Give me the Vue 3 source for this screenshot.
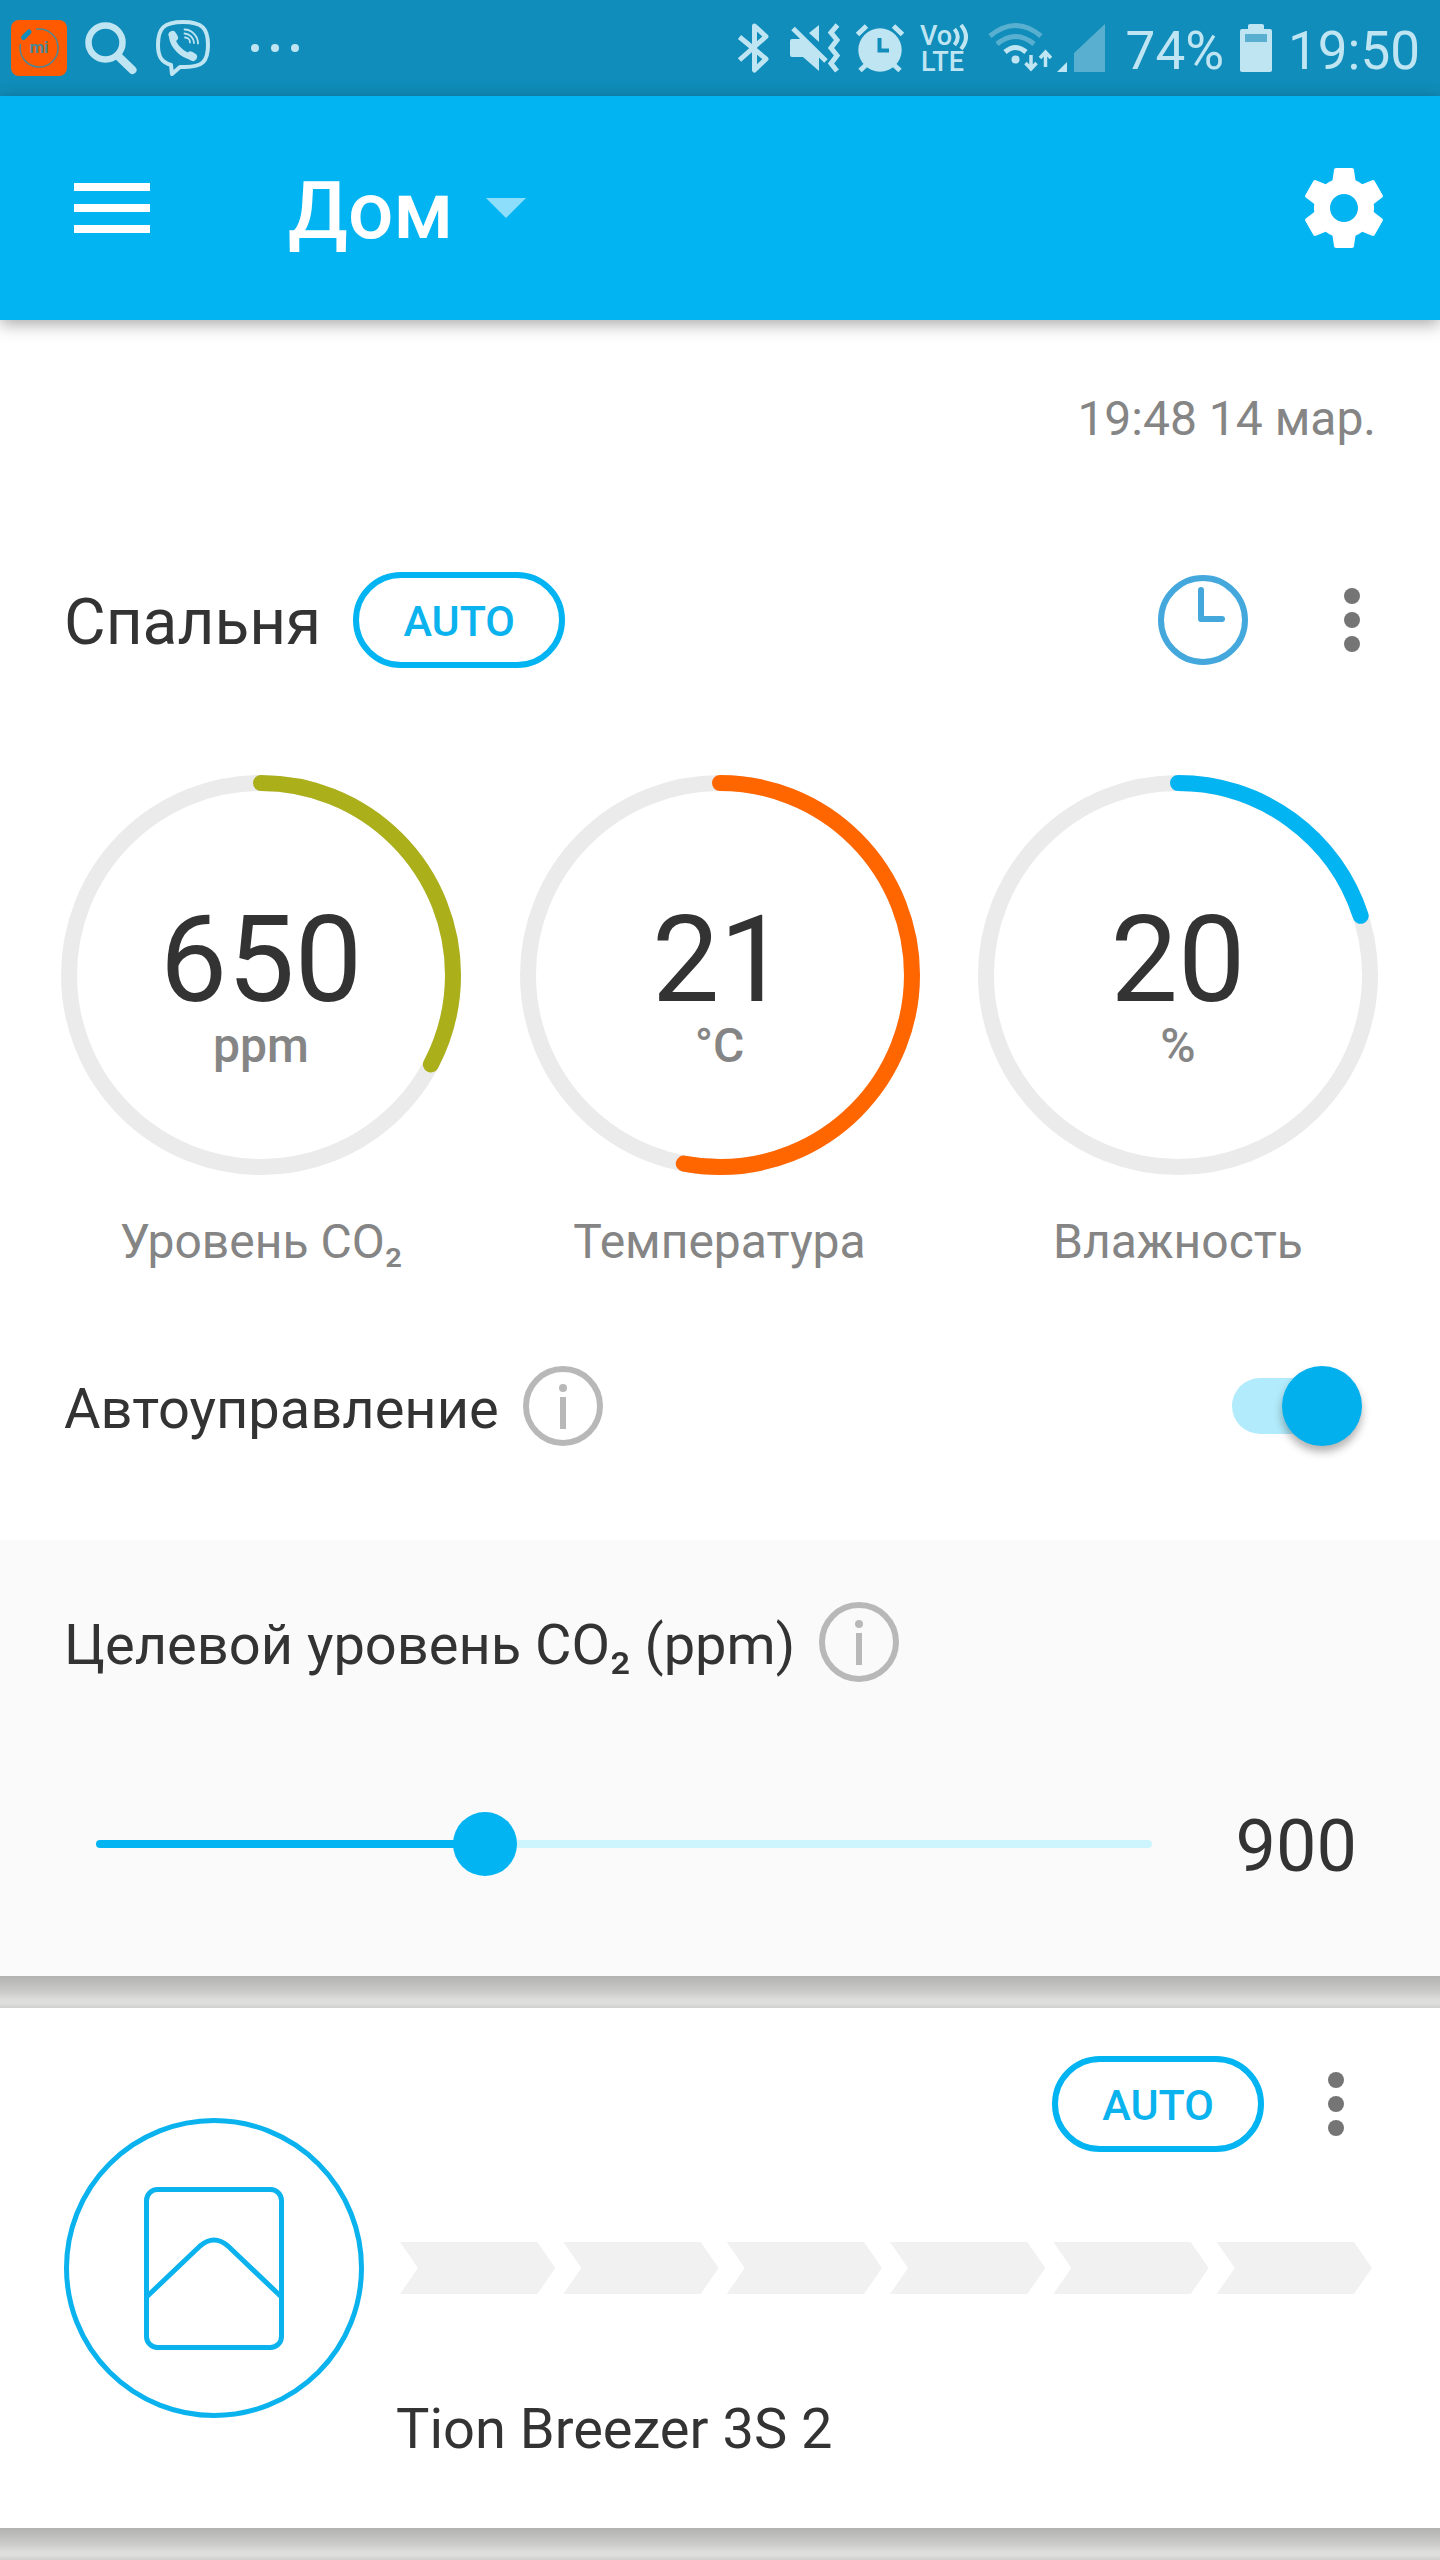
<script setup>
import { ref, computed } from 'vue';

const home = ref('home');
const autoControl = ref(true);
const target = ref(900);
const minTarget = 450;
const maxTarget = 1700;

const radius = 192;
const circumference = 2 * Math.PI * radius;

const gauges = [
  { label: 'Уровень CO₂', value: 650, unit: 'ppm', color: '#abaf1a', part: 0.327 },
  { label: 'Температура', value: 21, unit: '°C', color: '#ff6600', part: 0.53 },
  { label: 'Влажность', value: 20, unit: '%', color: '#02b4f2', part: 0.2 }
];

const fill = computed(() => ((target.value - minTarget) / (maxTarget - minTarget)) * 100 + '%');

function dash(part) {
  return `${circumference * part} ${circumference}`;
}
</script>

<template>
  <div class="app">
    <div class="status-bar">
      <div class="status-group notifications">
        <svg width="56" height="56" viewBox="0 0 56 56">
          <rect width="56" height="56" rx="8" fill="#ff5a00" />
          <path d="M25 9.200A19 19 0 1 1 9.500 24" fill="none" stroke="#4a8796" stroke-width="1.500" />
          <path d="M12.500 17.500 18 12" stroke="#108dba" stroke-width="5" stroke-linecap="round" />
          <text x="28" y="33" class="mi-text">mi</text>
        </svg>
        <svg width="52" height="56" viewBox="0 0 52 56" fill="none" stroke="#bfe5f2">
          <circle cx="20.500" cy="22.500" r="17" stroke-width="6.500" />
          <path d="M33 36 47.500 50" stroke-width="8" stroke-linecap="round" />
        </svg>
        <svg width="56" height="56" viewBox="0 0 56 56" fill="none" stroke="#bfe5f2" stroke-linecap="round">
          <path d="M16 45C6 42 3 36 3 25 3 8 9 2 28 2S53 8 53 25 47 47 30 47H25L17 54Z" stroke-width="4" stroke-linejoin="round" />
          <path d="M17 17C18 26 27 35 37 37" stroke-width="6" />
          <path d="M17.500 15 19 17.500M35.500 35.500 38 37" stroke-width="8" />
          <path d="M29.500 9.500A14 14 0 0 1 43 23.500M29.500 13.500A10 10 0 0 1 39 23M30 17.500A5 5 0 0 1 35 22.500" stroke-width="1.800" />
        </svg>
        <svg class="more-dots" width="48" height="56" viewBox="0 0 48 56" fill="#bfe5f2">
          <circle cx="4" cy="28" r="4" /><circle cx="24" cy="28" r="4" /><circle cx="44" cy="28" r="4" />
        </svg>
      </div>
      <div class="status-group">
        <!-- bluetooth -->
        <svg width="36" height="56" viewBox="0 0 36 56" fill="none" stroke="#bfe5f2" stroke-width="5" stroke-linejoin="round">
          <path d="M3.500 17 30 39 18.500 50V6L30 16.500 3.500 40" />
        </svg>
        <!-- muted, vibrate -->
        <svg width="52" height="56" viewBox="0 0 52 56">
          <path d="M4 19H14L31 36V51L15 37H4Q2 37 2 35V21Q2 19 4 19ZM21 13 31 5V22Z" fill="#bfe5f2" />
          <path d="M8 6.500 41 39.500" stroke="#108dba" stroke-width="3" />
          <path d="M5 8.500 38 41M49.500 5 43 12.500 49 20 43 28 49 35.500 43 43.500 49 51" fill="none" stroke="#bfe5f2" stroke-width="5" />
        </svg>
        <!-- alarm -->
        <svg width="48" height="56" viewBox="0 0 48 56" fill="none" stroke="#bfe5f2" stroke-width="5">
          <circle cx="24" cy="30" r="21.700" fill="#bfe5f2" stroke="none" />
          <path d="M1.500 14.500 10.500 6M37.500 6 46.500 14.500M4 50.500 11 44M44 50.500 37 44" />
          <path d="M23.500 18V30.500H33" stroke="#108dba" stroke-width="4" />
        </svg>
        <svg class="lte" width="50" height="56" viewBox="0 0 50 56" fill="none" stroke="#bfe5f2" stroke-width="4">
          <text x="0" y="25" class="lte-text">Vo</text>
          <text x="1" y="51" class="lte-text">LTE</text>
          <path d="M34.500 9Q41 17 34.500 25M41 5Q51 17 41 29" />
        </svg>
        <div class="network">
          <svg width="66" height="56" viewBox="0 0 66 56" fill="none" stroke="#bfe5f2" stroke-width="5">
            <path d="M4 16Q29.500-5 55 16M11 24Q29.500 9 48 24" stroke="#58afd0" />
            <path d="M19 32Q29.500 23 40 32" />
            <circle cx="29.500" cy="39.500" r="4" fill="#bfe5f2" stroke="none" />
            <path d="M45 35V48M39.500 43 45 49 50.500 43M59.500 47V33M54 38 59.500 32 65 38" stroke-width="3.500" />
          </svg>
          <svg width="50" height="56" viewBox="0 0 50 56">
            <path d="M1 52 11 42V52Z" fill="#bfe5f2" />
            <path d="M18 52V33L49 4V52Z" fill="#58afd0" />
          </svg>
        </div>
        <span class="status-text low">74%</span>
        <svg width="32" height="56" viewBox="0 0 32 56" fill="#bfe5f2">
          <rect x="8" y="4" width="16" height="8" rx="2" />
          <rect y="9" width="32" height="43" rx="2" />
          <rect x="5" y="14" width="22" height="8" fill="#58afd0" />
        </svg>
        <span class="status-text low">19:50</span>
      </div>
    </div>

    <header class="toolbar">
      <button class="icon-button" aria-label="Меню">
        <svg width="76" height="50" viewBox="0 0 76 50" fill="#fff">
          <rect width="76" height="8" /><rect y="21" width="76" height="8" /><rect y="42" width="76" height="8" />
        </svg>
      </button>
      <label class="home">
        <select v-model="home" class="low" aria-label="Дом">
          <option value="home">Дом</option>
        </select>
        <svg width="40" height="20" viewBox="0 0 40 20" fill="#8cdefa"><path d="M0 0H40L20 20Z" /></svg>
      </label>
      <button class="icon-button" aria-label="Настройки">
        <svg width="96" height="96" viewBox="0 0 24 24" fill="#fff">
          <path d="M19.430 12.980c.04-.32.07-.64.07-.98s-.03-.66-.07-.98l2.110-1.650c.19-.15.24-.42.12-.64l-2-3.460c-.12-.22-.39-.3-.61-.22l-2.490 1c-.52-.4-1.080-.73-1.690-.98l-.38-2.650C14.460 2.180 14.250 2 14 2h-4c-.25 0-.46.18-.49.42l-.38 2.650c-.61.25-1.170.59-1.690.98l-2.490-1c-.23-.09-.49 0-.61.22l-2 3.460c-.13.22-.07.49.12.64l2.110 1.650c-.04.32-.07.65-.07.98s.03.66.07.98l-2.110 1.650c-.19.15-.24.42-.12.64l2 3.460c.12.22.39.3.61.22l2.490-1c.52.4 1.080.73 1.690.98l.38 2.650c.03.24.24.42.49.42h4c.25 0 .46-.18.49-.42l.38-2.650c.61-.25 1.170-.59 1.690-.98l2.490 1c.23.09.49 0 .61-.22l2-3.460c.12-.22.07-.49-.12-.64l-2.110-1.650zM12 15.500c-1.930 0-3.500-1.570-3.500-3.500s1.570-3.500 3.500-3.500 3.500 1.570 3.500 3.500-1.570 3.500-3.500 3.500z" />
        </svg>
      </button>
    </header>

    <main>
      <section class="room">
        <time class="updated">19:48 14 мар.</time>

        <div class="room-head">
          <h1 class="low">Спальня</h1>
          <button class="pill">AUTO</button>
          <button class="icon-button timer" aria-label="Таймер">
            <svg width="90" height="90" viewBox="0 0 90 90" fill="none" stroke="#45a8dd" stroke-width="6">
              <circle cx="45" cy="45" r="42" />
              <path d="M43 15V44H64" stroke-linecap="round" stroke-linejoin="round" />
            </svg>
          </button>
          <button class="icon-button" aria-label="Ещё">
            <svg width="16" height="64" viewBox="0 0 16 64" fill="#757575">
              <circle cx="8" cy="8" r="8" /><circle cx="8" cy="32" r="8" /><circle cx="8" cy="56" r="8" />
            </svg>
          </button>
        </div>

        <div class="gauges">
          <div class="gauge" v-for="gauge in gauges" :key="gauge.label">
            <div class="dial">
              <svg width="400" height="400" viewBox="0 0 400 400" fill="none" stroke-width="16">
                <circle cx="200" cy="200" :r="radius" stroke="#ebebeb" />
                <circle cx="200" cy="200" :r="radius" :stroke="gauge.color" :stroke-dasharray="dash(gauge.part)" stroke-linecap="round" transform="rotate(-90 200 200)" />
              </svg>
              <div class="reading">
                <div class="value">{{ gauge.value }}</div>
                <div class="unit">{{ gauge.unit }}</div>
              </div>
            </div>
            <div class="gauge-label">{{ gauge.label }}</div>
          </div>
        </div>

        <div class="setting">
          <label class="setting-label low" for="auto-control">Автоуправление</label>
          <button class="icon-button" aria-label="Об автоуправлении">
            <svg width="80" height="80" viewBox="0 0 80 80" fill="#b8b8b8">
              <circle cx="40" cy="40" r="37" fill="none" stroke="#b8b8b8" stroke-width="6" />
              <circle cx="40" cy="22" r="4" /><rect x="37" y="31" width="6" height="32" />
            </svg>
          </button>
          <input id="auto-control" v-model="autoControl" class="switch" type="checkbox" />
        </div>
      </section>

      <section class="target">
        <div class="setting">
          <label class="setting-label low" for="target">Целевой уровень CO₂ (ppm)</label>
          <button class="icon-button" aria-label="О целевом уровне">
            <svg width="80" height="80" viewBox="0 0 80 80" fill="#b8b8b8">
              <circle cx="40" cy="40" r="37" fill="none" stroke="#b8b8b8" stroke-width="6" />
              <circle cx="40" cy="22" r="4" /><rect x="37" y="31" width="6" height="32" />
            </svg>
          </button>
        </div>
        <div class="slider-row">
          <input id="target" v-model.number="target" class="slider" type="range" :min="minTarget" :max="maxTarget" step="50" :style="{ '--fill': fill }" />
          <output class="low" for="target">{{ target }}</output>
        </div>
      </section>

      <div class="gap"></div>

      <section class="device">
        <svg class="device-icon" width="300" height="300" viewBox="0 0 300 300" fill="none" stroke="#0ab2ee" stroke-width="5">
          <circle cx="150" cy="150" r="147.500" />
          <rect x="82.500" y="71.500" width="135" height="158" rx="11" />
          <path d="M82.500 179 136 128Q150 116 164 128L217.500 179" />
        </svg>
        <div class="device-info">
          <div class="device-actions">
            <button class="pill">AUTO</button>
            <button class="icon-button" aria-label="Ещё">
              <svg width="16" height="64" viewBox="0 0 16 64" fill="#757575">
                <circle cx="8" cy="8" r="8" /><circle cx="8" cy="32" r="8" /><circle cx="8" cy="56" r="8" />
              </svg>
            </button>
          </div>
          <div class="speed">
            <span v-for="step in 6" :key="step"></span>
          </div>
          <h2>Tion Breezer 3S 2</h2>
        </div>
      </section>

      <div class="gap"></div>
    </main>
  </div>
</template>

<style>
body {
  margin: 0;
  background: #dfdfdd;
}
</style>

<style scoped>
.app {
  font-family: Roboto, "Noto Sans", sans-serif;
  color: #333;
}

svg {
  display: block;
  flex: none;
}

h1,
h2 {
  margin: 0;
  font-weight: 400;
}

/* text next to icons sits slightly below their middle */
.low {
  padding-top: 6px;
}

.icon-button {
  padding: 0;
  border: none;
  background: none;
  cursor: pointer;
}

.status-bar {
  display: flex;
  justify-content: space-between;
  align-items: center;
  height: 96px;
  padding: 0 20px 0 11px;
  background: #108dba;
  color: #bfe5f2;
}

.status-group {
  display: flex;
  align-items: center;
  gap: 16px;
}

.notifications {
  gap: 18px;
}

.more-dots {
  margin-left: 22px;
}

.network {
  display: flex;
  gap: 4px;
  margin-right: 4px;
}

.status-text {
  font-size: 53px;
  line-height: 64px;
}

.mi-text {
  font-size: 17px;
  font-weight: 700;
  fill: #4a8796;
  text-anchor: middle;
}

.lte {
  overflow: visible;
}

.lte-text {
  font-size: 27px;
  font-weight: 500;
  fill: #bfe5f2;
  stroke: none;
}

.toolbar {
  position: relative;
  display: flex;
  align-items: center;
  height: 224px;
  padding: 0 48px 0 74px;
  background: #02b4f2;
  box-shadow: 0 4px 16px rgba(0, 0, 0, 0.35);
}

.home {
  display: flex;
  align-items: center;
  flex: 1;
  gap: 32px;
  margin-left: 138px;
}

.home select {
  appearance: none;
  padding-right: 0;
  padding-bottom: 0;
  padding-left: 0;
  border: none;
  background: none;
  color: #fff;
  font-family: inherit;
  font-size: 80px;
  font-weight: 500;
  line-height: 96px;
}

.room {
  padding: 71px 0 94px;
  background: #fff;
}

.updated {
  display: block;
  padding: 0 64px;
  color: #858585;
  font-size: 48px;
  line-height: 56px;
  text-align: right;
}

.room-head {
  display: flex;
  align-items: center;
  margin-top: 125px;
  padding: 0 80px 0 64px;
}

h1 {
  margin-right: 32px;
  font-size: 64px;
  line-height: 72px;
}

.timer {
  margin-right: 96px;
  margin-left: auto;
}

.pill {
  box-sizing: border-box;
  width: 212px;
  height: 96px;
  padding: 2px 0 0;
  border: 6px solid #02b4f2;
  border-radius: 48px;
  background: #fff;
  color: #0ab2ee;
  font-family: inherit;
  font-size: 43px;
  font-weight: 500;
  cursor: pointer;
}

.gauges {
  display: flex;
  justify-content: space-between;
  margin-top: 107px;
  padding: 0 62px 0 61px;
}

.dial {
  display: grid;
  align-items: center;
}

.dial > * {
  grid-area: 1 / 1;
}

.reading {
  padding-top: 26px;
  text-align: center;
}

.value {
  font-size: 120px;
  line-height: 116px;
}

.unit {
  color: #858585;
  font-size: 48px;
  font-weight: 500;
  line-height: 56px;
}

.gauge-label {
  margin-top: 39px;
  color: #858585;
  font-size: 48px;
  line-height: 56px;
  text-align: center;
}

.setting {
  display: flex;
  align-items: center;
  gap: 24px;
  padding: 0 78px 0 64px;
}

.room .setting {
  margin-top: 96px;
}

.setting-label {
  font-size: 56px;
  line-height: 64px;
}

.switch {
  appearance: none;
  display: flex;
  align-items: center;
  width: 130px;
  height: 80px;
  margin: 0 0 0 auto;
  cursor: pointer;
}

.switch::before {
  content: "";
  width: 112px;
  height: 56px;
  border-radius: 28px;
  background: #e0e0e0;
}

.switch::after {
  content: "";
  width: 80px;
  height: 80px;
  margin-left: -112px;
  border-radius: 50%;
  background: #fafafa;
  box-shadow: 0 6px 8px rgba(0, 0, 0, 0.3);
}

.switch:checked::before {
  background: #b2ebfb;
}

.switch:checked::after {
  margin-left: -62px;
  background: #02b0ee;
}

.target {
  padding: 62px 0 88px;
  background: #fafafa;
}

.slider-row {
  display: flex;
  align-items: center;
  gap: 84px;
  min-height: 88px;
  margin-top: 118px;
  padding: 0 83px 0 96px;
}

.slider {
  appearance: none;
  flex: 1;
  min-width: 0;
  height: 64px;
  margin: 0;
  background: none;
  cursor: pointer;
}

.slider::-webkit-slider-runnable-track {
  height: 8px;
  border-radius: 4px;
  background: linear-gradient(to right, #02b4f2 var(--fill), #ccf5fe var(--fill));
}

.slider::-webkit-slider-thumb {
  appearance: none;
  width: 64px;
  height: 64px;
  margin-top: -28px;
  border-radius: 50%;
  background: #02b4f2;
}

output {
  font-size: 72px;
  line-height: 80px;
}

.gap {
  height: 32px;
  background: linear-gradient(#b2b2b0, #cbcbc9 50%, #dededc 75%, #dededc 86%, #d0d0d0);
}

.device {
  display: flex;
  gap: 32px;
  padding: 48px 64px 67px;
  background: #fff;
}

.device-icon {
  margin-top: 62px;
}

.device-info {
  flex: 1;
}

.device-actions {
  display: flex;
  justify-content: flex-end;
  align-items: center;
  gap: 64px;
  padding-right: 32px;
}

.speed {
  display: flex;
  gap: 8px;
  margin-top: 90px;
  padding: 0 4px;
}

.speed span {
  flex: 1;
  height: 52px;
  background: #f1f1f1;
  clip-path: polygon(0 0, calc(100% - 18px) 0, 100% 50%, calc(100% - 18px) 100%, 0 100%, 18px 50%);
}

h2 {
  margin-top: 103px;
  font-size: 56px;
  line-height: 64px;
}
</style>
